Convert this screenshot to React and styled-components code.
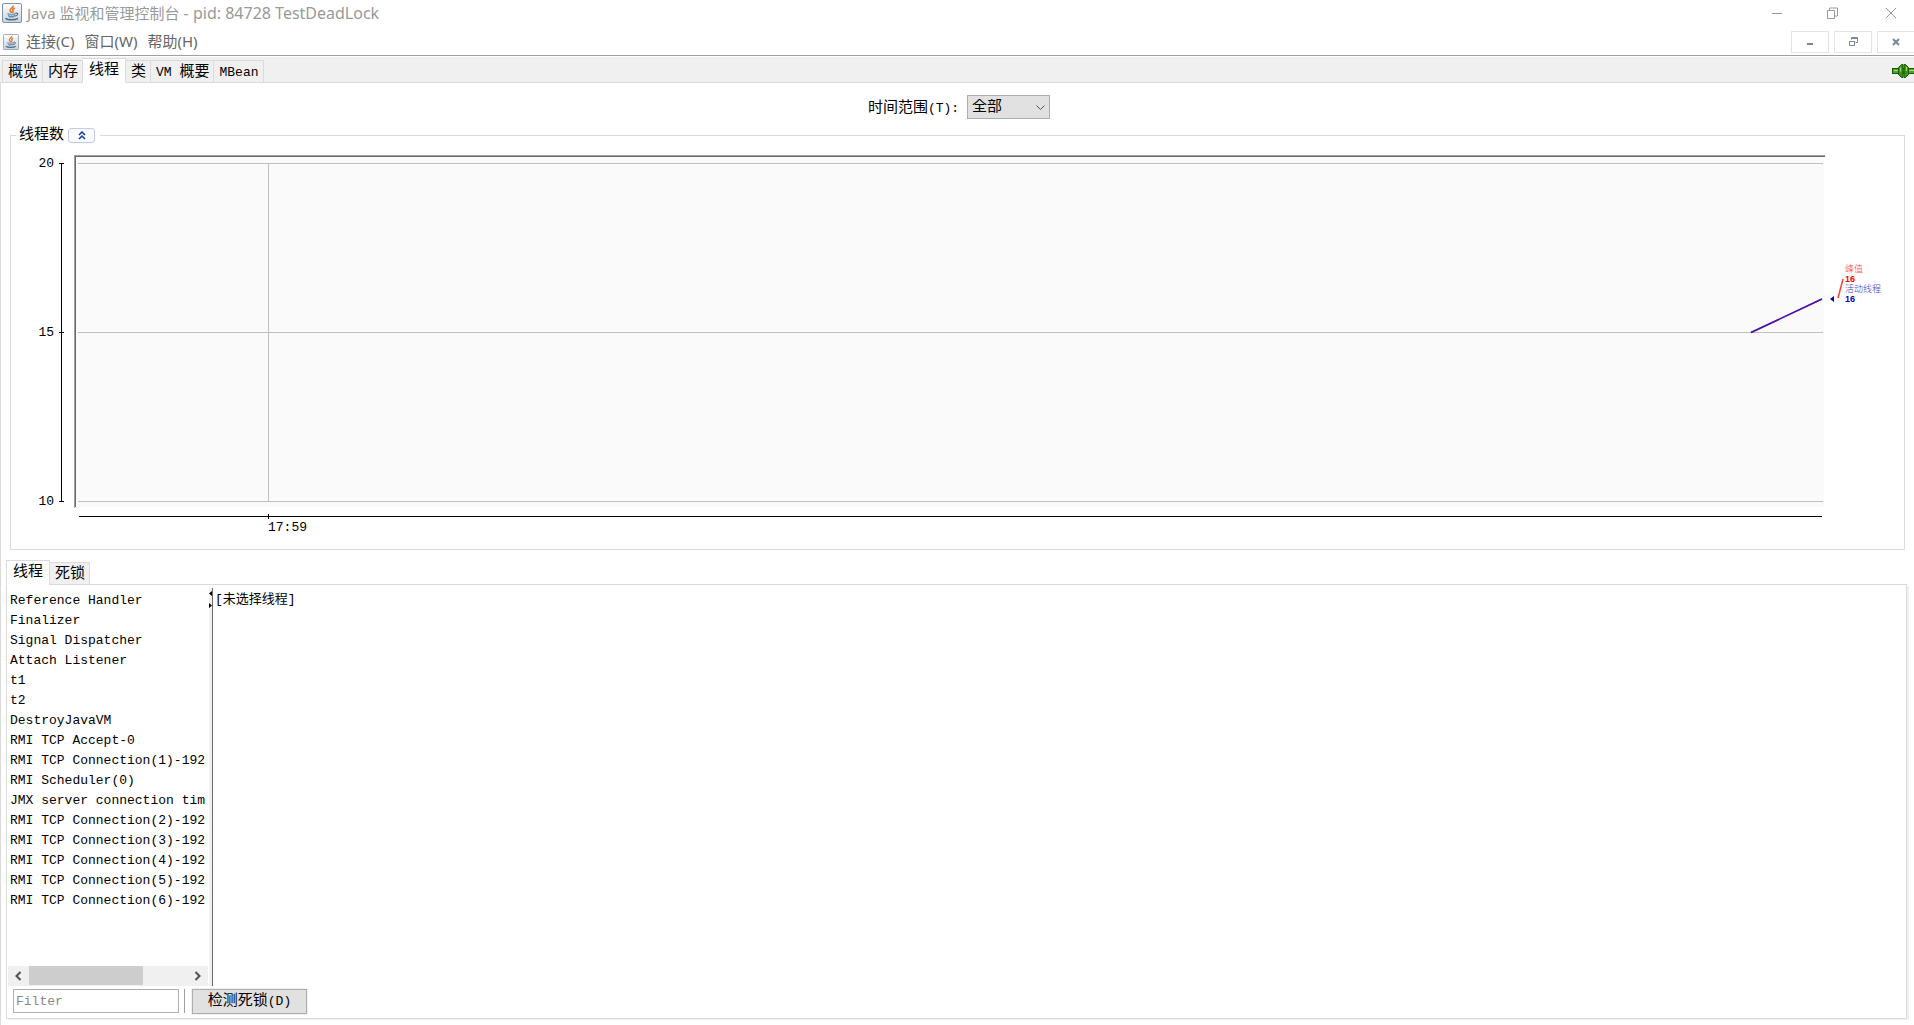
import React from "react";
import { useState } from "react";
import styled, { createGlobalStyle, css } from "styled-components";

const GlobalStyle = createGlobalStyle`
  * {
    box-sizing: border-box;
  }
  body {
    margin: 0;
    background: #fff;
    color: #000;
    font-family: "Liberation Mono", "Noto Sans CJK SC", monospace;
    font-size: 15px;
  }
  button, input, select {
    font: inherit;
    color: inherit;
    margin: 0;
  }
`;
const Window = styled.div`
  min-height: 100vh;
  display: flex;
  flex-direction: column;
  overflow: hidden;
`;
const TitleBar = styled.header`
  height: 29px;
  padding: 0 14px 4px 2px;
  display: flex;
  align-items: center;
  gap: 5px;
  color: #999;
`;
const Title = styled.h1`
  flex: 1;
  margin: 0;
  font-family: "Noto Sans", "Noto Sans CJK SC", sans-serif;
  font-size: 15px;
  line-height: 20px;
  font-weight: 400;
`;
const Process = styled.span`
  font-size: 16px;
`;
const WindowControls = styled.div`
  display: flex;
  gap: 42px;
`;
const PlainButton = styled.button`
  padding: 0;
  border: none;
  background: none;
  display: flex;
  align-items: center;
  justify-content: center;
`;
const MenuBar = styled.nav`
  height: 27px;
  padding: 0 0 1px 3px;
  display: flex;
  align-items: center;
  border-bottom: 1px solid #a0a0a0;
  color: #666;
`;
const MenuItems = styled.div`
  display: flex;
  gap: 10px;
  margin-left: 7px;
  padding-bottom: 2px;
`;
const MenuItem = styled.button`
  padding: 0;
  border: none;
  background: none;
  font-family: "Noto Sans", "Noto Sans CJK SC", sans-serif;
  font-size: 15px;
  line-height: 20px;
`;
const FrameControls = styled.div`
  margin-left: auto;
  display: flex;
  gap: 5px;
`;
const FrameButton = styled.button`
  width: 38px;
  height: 22px;
  padding: 0;
  border: 1px solid #e3e3e3;
  background: #fff;
  display: flex;
  align-items: center;
  justify-content: center;
  &:last-child {
    width: 37px;
    border-right: none;
  }
`;
const Tabs = styled.div`
  display: flex;
  align-items: flex-end;
  height: ${(props) => (props.$main ? "26px" : "25px")};
  padding-left: ${(props) => (props.$main ? "2px" : "0px")};
  margin-top: ${(props) => (props.$main ? "1px" : "0px")};
  background: ${(props) => (props.$main ? "#f0f0f0" : "#fff")};
  box-shadow: inset 0 -1px #dadada;
`;
const Tab = styled.button`
  height: 23px;
  padding: 2px 4px 0 5px;
  border: 1px solid #dadada;
  border-left-width: 0;
  background: #f0f0f0;
  line-height: 19px;
  white-space: nowrap;
  &:first-child {
    border-left-width: 1px;
  }
  ${(props) =>
    props.$active &&
    css`
      height: 25px;
      padding: 0 6px 1px 6px;
      border-bottom-color: #fff;
      background: #fff;
    `}
`;
// half-width letters next to the full-width ones
const Latin = styled.span`
  font-size: 13px;
`;
const Status = styled.span`
  margin-left: auto;
  height: 25px;
  display: flex;
  align-items: center;
`;
const Page = styled.main`
  flex: 1;
  display: flex;
  flex-direction: column;
  border-left: 1px solid #dadada;
  padding: 12px 7px 6px 5px;
`;
const RangeRow = styled.div`
  display: flex;
  justify-content: center;
  align-items: center;
  gap: 8px;
  height: 24px;
  padding-left: 5px;
`;
const RangeLabel = styled.label`
  padding-bottom: 2px;
  white-space: nowrap;
`;
const SelectBox = styled.div`
  position: relative;
  width: 83px;
  svg {
    position: absolute;
    right: 5px;
    top: 10px;
    pointer-events: none;
  }
`;
const Select = styled.select`
  appearance: none;
  width: 100%;
  height: 24px;
  padding: 0 4px;
  border: 1px solid #adadad;
  border-radius: 0;
  background: #e1e1e1;
  display: block;
`;
const ChartGroup = styled.fieldset`
  min-width: 0;
  margin: 8px 2px 0 4px;
  padding: 0;
  border: 1px solid #dadada;
`;
const Legend = styled.legend`
  height: 16px;
  margin-left: 5px;
  padding: 0 5px 0 3px;
  display: flex;
  align-items: center;
  gap: 4px;
  line-height: 16px;
`;
const GroupTitle = styled.span`
  padding-top: 2px;
`;
const FoldButton = styled.button`
  width: 27px;
  height: 15px;
  padding: 0;
  border: 1px solid #c3cbe6;
  border-radius: 3px;
  background: #fbfcff;
  display: flex;
  align-items: center;
  justify-content: center;
`;
const Chart = styled.div`
  display: flex;
  height: 406px;
  svg {
    display: block;
  }
`;
const YAxis = styled.svg`
  width: 63px;
  height: 100%;
  flex: none;
`;
const Plot = styled.svg`
  flex: 1;
  min-width: 0;
  height: 100%;
`;
const Span = styled.rect`
  width: calc(100% - ${(props) => props.$inset}px);
`;
const Values = styled.svg`
  width: 79px;
  height: 100%;
  flex: none;
`;
const AxisText = styled.text`
  font-size: 13px;
`;
const ValueText = styled.text`
  font-family: "Liberation Sans", "Noto Sans CJK SC", sans-serif;
  font-size: 9px;
  font-weight: ${(props) => (props.$bold ? 700 : 300)};
`;
const Lower = styled.section`
  flex: 1;
  display: flex;
  flex-direction: column;
  margin-top: 10px;
`;
const LowerPanel = styled.div`
  flex: 1;
  display: flex;
  flex-direction: column;
  border: 1px solid #dadada;
  border-top: none;
  box-shadow: 2px 1px #f0f0f0;
  padding: 3px 1px 4px;
`;
const Split = styled.div`
  flex: 1;
  display: flex;
`;
const ListPane = styled.div`
  width: 200px;
  display: flex;
  flex-direction: column;
  overflow: hidden;
`;
const ThreadList = styled.ul`
  flex: 1;
  margin: 0;
  padding: 3px 0 0 2px;
  list-style: none;
`;
const Thread = styled.li`
  height: 20px;
  font-size: 13px;
  line-height: 20px;
  white-space: pre;
`;
const ScrollBar = styled.div`
  display: flex;
  align-items: flex-start;
  height: 20px;
  background: #f0f0f0;
`;
const ScrollArrow = styled(PlainButton)`
  width: 21px;
  height: 19px;
`;
const ScrollTrack = styled.div`
  flex: 1;
  height: 19px;
`;
const ScrollThumb = styled.div`
  width: 72%;
  height: 100%;
  background: #cdcdcd;
`;
const Divider = styled.div`
  width: 5px;
  border-left: 1px solid #fff;
  border-right: 1px solid #696969;
  background: #f0f0f0;
  svg {
    display: block;
  }
`;
const Detail = styled.div`
  flex: 1;
  padding: 2px 2px;
  font-size: 13px;
  line-height: 20px;
`;
const Actions = styled.div`
  display: flex;
  align-items: center;
  height: 28px;
  padding: 2px 5px 0;
`;
const FilterInput = styled.input`
  width: 166px;
  height: 24px;
  padding: 0 2px;
  border: 1px solid #abadb3;
  font-size: 13px;
  &::placeholder {
    color: #888;
    opacity: 1;
  }
`;
const Separator = styled.div`
  width: 1px;
  height: 24px;
  margin: 0 7px 0 5px;
  background: #a0a0a0;
`;
const DetectButton = styled.button`
  width: 115px;
  height: 25px;
  padding: 2px 0 0;
  border: 1px solid #adadad;
  background: #e1e1e1;
  box-shadow: 0 0 0 1px #f0f0f0;
  line-height: 20px;
`;

const JavaIcon = ({ size }) => (
  <svg width={size} height={size} viewBox="0 0 20 20">
    <defs>
      <linearGradient id="cup" x1="0" y1="0" x2="0" y2="1">
        <stop offset="0" stopColor="#fdfdfd" />
        <stop offset="1" stopColor="#c9d2dc" />
      </linearGradient>
    </defs>
    <rect x="0.5" y="0.5" width="19" height="19" rx="1.5" fill="url(#cup)" stroke="#7d94a8" />
    <path d="M11 2.5C12 4.5 7.5 5.5 8 7.5c.3 1 1.5 1.4 1.5 2.5M12.800 5C11 6 10.300 6.500 11 7.500c.6.800.3 1.500-.5 2.300" fill="none" stroke="#e8782a" strokeWidth="1.600" />
    <path d="M5.500 10c0 2.200.8 3.800 1.800 4.500h4.400c1-.7 1.800-2.300 1.800-4.500-2 .9-6 .9-8 0z" fill="#6b8cab" />
    <path d="M6.500 11.800c2 .7 4 .7 6 0" fill="none" stroke="#e4ebf2" strokeWidth="0.8" />
    <path d="M13.500 10.200c3-.6 3 2.300-.7 3" fill="none" stroke="#456d90" strokeWidth="1.200" />
    <path d="M3.500 15.300c2.500 1.900 9.500 1.900 12.500 0" fill="none" stroke="#456d90" strokeWidth="1.500" />
  </svg>
);

const Plug = () => (
  <svg width="22" height="14" viewBox="0 0 22 14">
    <rect x="0.5" y="4.5" width="22" height="5" fill="#4fa51c" stroke="#175a08" />
    <path d="M2 6.5h20" stroke="#a5dd74" />
    <path d="M11 .5H9.500L6.500 3.500v7l3 3H11zM12 .5h1.500l3 3v7l-3 3H12z" fill="#3c9412" stroke="#175a08" />
    <path d="M8.500 3.500v4M14.500 3v4" stroke="#a5dd74" />
  </svg>
);

const mainTabs = [
  { id: "overview", label: "概览" },
  { id: "memory", label: "内存" },
  { id: "threads", label: "线程" },
  { id: "classes", label: "类" },
  { id: "vm", label: <><Latin>VM </Latin>概要</> },
  { id: "mbean", label: <Latin>MBean</Latin> },
];

const threads = [
  "Reference Handler",
  "Finalizer",
  "Signal Dispatcher",
  "Attach Listener",
  "t1",
  "t2",
  "DestroyJavaVM",
  "RMI TCP Accept-0",
  "RMI TCP Connection(1)-192",
  "RMI Scheduler(0)",
  "JMX server connection tim",
  "RMI TCP Connection(2)-192",
  "RMI TCP Connection(3)-192",
  "RMI TCP Connection(4)-192",
  "RMI TCP Connection(5)-192",
  "RMI TCP Connection(6)-192",
];

const ticks = [
  { value: 20, y: 20 },
  { value: 15, y: 189 },
  { value: 10, y: 358 },
];

const ThreadChart = () => (
  <Chart>
    <YAxis>
      <path d="M50.5 20v339" stroke="#000" />
      {ticks.map((t) => (
        <g key={t.value}>
          <path d={`M48 ${t.y + 0.5}h5`} stroke="#000" />
          <AxisText x="43" y={t.y + 4} textAnchor="end">{t.value}</AxisText>
        </g>
      ))}
    </YAxis>
    <Plot>
      <Span x="2" y="14" $inset={3} height="350" fill="#fafafa" />
      <Span x="0" y="12" $inset={0} height="1" fill="#a0a0a0" />
      <Span x="1" y="13" $inset={1} height="1" fill="#696969" />
      <rect x="0" y="12" width="1" height="353" fill="#a0a0a0" />
      <rect x="1" y="13" width="1" height="351" fill="#696969" />
      {ticks.map((t) => (
        <Span key={t.value} x="4" y={t.y} $inset={6} height="1" fill="#c0c0c0" />
      ))}
      <rect x="194" y="20" width="1" height="339" fill="#c0c0c0" />
      <Span x="5" y="373" $inset={8} height="1" fill="#000" />
      <rect x="194" y="371" width="1" height="5" fill="#000" />
      <AxisText x="194" y="388">17:59</AxisText>
      <svg x="100%" overflow="visible">
        <path d="M-74 189.500L-3 156" stroke="#c0209a" strokeWidth="1.500" />
        <path d="M-74 189.500L-3 156" stroke="#1a10b4" strokeOpacity="0.750" strokeWidth="1.500" />
      </svg>
    </Plot>
    <Values>
      <path d="M5 156l4-3v6z" fill="#0000b0" />
      <path d="M13 155l5-19" stroke="#ff3b3b" strokeWidth="1.500" />
      <ValueText x="20" y="129" fill="#ff4040">峰值</ValueText>
      <ValueText x="20" y="139" fill="#f00000" $bold>16</ValueText>
      <ValueText x="20" y="149" fill="#4040c8">活动线程</ValueText>
      <ValueText x="20" y="159" fill="#0000b0" $bold>16</ValueText>
    </Values>
  </Chart>
);

const App = () => {
  const [tab, setTab] = useState("threads");
  const [open, setOpen] = useState(true);
  const [lower, setLower] = useState("threads");
  const [filter, setFilter] = useState("");

  return (
    <Window>
      <GlobalStyle />
      <TitleBar>
        <JavaIcon size={20} />
        <Title>Java 监视和管理控制台<Process> - pid: 84728 TestDeadLock</Process></Title>
        <WindowControls>
          <PlainButton aria-label="最小化">
            <svg width="14" height="12"><path d="M2 6.500h10" stroke="#999" /></svg>
          </PlainButton>
          <PlainButton aria-label="还原">
            <svg width="14" height="12" fill="none" stroke="#999">
              <path d="M1.500 3.500h7v8h-7zM3.500 3v-2h8v8h-3" />
            </svg>
          </PlainButton>
          <PlainButton aria-label="关闭">
            <svg width="18" height="12"><path d="M4 1l10 10M14 1L4 11" stroke="#999" /></svg>
          </PlainButton>
        </WindowControls>
      </TitleBar>
      <MenuBar>
        <JavaIcon size={16} />
        <MenuItems>
          <MenuItem>连接(C)</MenuItem>
          <MenuItem>窗口(W)</MenuItem>
          <MenuItem>帮助(H)</MenuItem>
        </MenuItems>
        <FrameControls>
          <FrameButton aria-label="最小化窗口">
            <svg width="8" height="8"><path d="M1 6h6" stroke="#788897" strokeWidth="2" /></svg>
          </FrameButton>
          <FrameButton aria-label="还原窗口">
            <svg width="9" height="9" fill="none" stroke="#788897">
              <path d="M.5 4.500h5v4h-5zM2.500 2.500V.5h6v5h-2M0 4.500h6M2 1.500h7" />
            </svg>
          </FrameButton>
          <FrameButton aria-label="关闭窗口">
            <svg width="8" height="8"><path d="M1 1l6 6M7 1L1 7" stroke="#788897" strokeWidth="2" /></svg>
          </FrameButton>
        </FrameControls>
      </MenuBar>
      <Tabs $main role="tablist">
        {mainTabs.map((t) => (
          <Tab key={t.id} role="tab" aria-selected={tab === t.id} $active={tab === t.id} onClick={() => setTab(t.id)}>
            {t.label}
          </Tab>
        ))}
        <Status><Plug /></Status>
      </Tabs>
      <Page>
        <RangeRow>
          <RangeLabel htmlFor="range">时间范围<Latin>(T):</Latin></RangeLabel>
          <SelectBox>
            <Select id="range">
              <option>全部</option>
            </Select>
            <svg width="9" height="6"><path d="M.5.5l4 4 4-4" fill="none" stroke="#555" /></svg>
          </SelectBox>
        </RangeRow>
        <ChartGroup>
          <Legend>
            <GroupTitle>线程数</GroupTitle>
            <FoldButton aria-label="折叠" onClick={() => setOpen(!open)}>
              <svg width="8" height="9"><path d="M1 4l3-3 3 3M1 8l3-3 3 3" fill="none" stroke="#0a3c9e" strokeWidth="1.500" /></svg>
            </FoldButton>
          </Legend>
          {open && <ThreadChart />}
        </ChartGroup>
        <Lower>
          <Tabs role="tablist">
            <Tab role="tab" aria-selected={lower === "threads"} $active={lower === "threads"} onClick={() => setLower("threads")}>线程</Tab>
            <Tab role="tab" aria-selected={lower === "deadlock"} $active={lower === "deadlock"} onClick={() => setLower("deadlock")}>死锁</Tab>
          </Tabs>
          <LowerPanel>
            <Split>
              <ListPane>
                <ThreadList>
                  {threads
                    .filter((t) => t.toLowerCase().includes(filter.toLowerCase()))
                    .map((t) => (
                      <Thread key={t}>{t}</Thread>
                    ))}
                </ThreadList>
                <ScrollBar>
                  <ScrollArrow aria-label="向左">
                    <svg width="10" height="10"><path d="M6.500 1l-4 4 4 4" fill="none" stroke="#505050" strokeWidth="2" /></svg>
                  </ScrollArrow>
                  <ScrollTrack><ScrollThumb /></ScrollTrack>
                  <ScrollArrow aria-label="向右">
                    <svg width="8" height="10"><path d="M1.500 1l4 4-4 4" fill="none" stroke="#505050" strokeWidth="2" /></svg>
                  </ScrollArrow>
                </ScrollBar>
              </ListPane>
              <Divider>
                <svg width="3" height="20"><path d="M3 3v5L0 5.500zM0 15v5l3-2.500z" /></svg>
              </Divider>
              <Detail>[未选择线程]</Detail>
            </Split>
            <Actions>
              <FilterInput aria-label="Filter" placeholder="Filter" value={filter} onChange={(e) => setFilter(e.target.value)} />
              <Separator />
              <DetectButton>检测死锁<Latin>(D)</Latin></DetectButton>
            </Actions>
          </LowerPanel>
        </Lower>
      </Page>
    </Window>
  );
};

export default App;
